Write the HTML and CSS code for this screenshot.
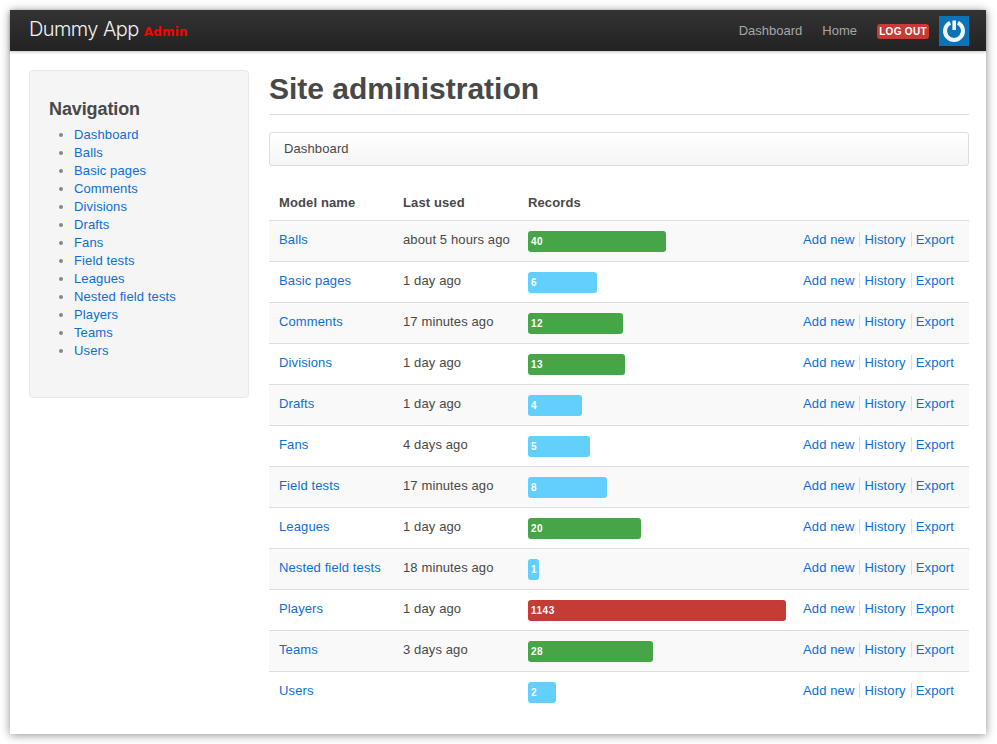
FILE: index.html
```html
<!DOCTYPE html>
<html lang="en">
<head>
<meta charset="utf-8">
<title>Site administration</title>
<link rel="stylesheet" href="styles.css">
</head>
<body>
<div class="window">
  <header class="navbar">
    <div class="brand">Dummy App <span class="brand-tag">Admin</span></div>
    <nav class="topnav">
      <a href="#">Dashboard</a>
      <a href="#">Home</a>
      <a href="#" class="logout">LOG OUT</a>
      <span class="avatar">
        <svg width="30" height="30" viewBox="0 0 30 30"><path d="M11.2 6.8a9 9 0 1 0 7.6 0" fill="none" stroke="#f1f6fa" stroke-width="4"/><path d="M15.2 4.5v9.5" fill="none" stroke="#f1f6fa" stroke-width="3.6"/></svg>
      </span>
    </nav>
  </header>
  <div class="layout">
    <aside class="sidebar">
      <h3>Navigation</h3>
      <ul>
        <li><a href="#">Dashboard</a></li>
        <li><a href="#">Balls</a></li>
        <li><a href="#">Basic pages</a></li>
        <li><a href="#">Comments</a></li>
        <li><a href="#">Divisions</a></li>
        <li><a href="#">Drafts</a></li>
        <li><a href="#">Fans</a></li>
        <li><a href="#">Field tests</a></li>
        <li><a href="#">Leagues</a></li>
        <li><a href="#">Nested field tests</a></li>
        <li><a href="#">Players</a></li>
        <li><a href="#">Teams</a></li>
        <li><a href="#">Users</a></li>
      </ul>
    </aside>
    <main class="content">
      <h1>Site administration</h1>
      <div class="breadcrumb">Dashboard</div>
      <table class="models">
        <thead>
          <tr><th class="c-name">Model name</th><th class="c-used">Last used</th><th class="c-rec">Records</th><th class="c-act"></th></tr>
        </thead>
        <tbody>
          <tr><td><a href="#">Balls</a></td><td>about 5 hours ago</td><td><div class="bar green" style="width:138px">40</div></td><td class="actions"><a href="#">Add new</a><a href="#">History</a><a href="#">Export</a></td></tr>
          <tr><td><a href="#">Basic pages</a></td><td>1 day ago</td><td><div class="bar blue" style="width:69px">6</div></td><td class="actions"><a href="#">Add new</a><a href="#">History</a><a href="#">Export</a></td></tr>
          <tr><td><a href="#">Comments</a></td><td>17 minutes ago</td><td><div class="bar green" style="width:95px">12</div></td><td class="actions"><a href="#">Add new</a><a href="#">History</a><a href="#">Export</a></td></tr>
          <tr><td><a href="#">Divisions</a></td><td>1 day ago</td><td><div class="bar green" style="width:97px">13</div></td><td class="actions"><a href="#">Add new</a><a href="#">History</a><a href="#">Export</a></td></tr>
          <tr><td><a href="#">Drafts</a></td><td>1 day ago</td><td><div class="bar blue" style="width:54px">4</div></td><td class="actions"><a href="#">Add new</a><a href="#">History</a><a href="#">Export</a></td></tr>
          <tr><td><a href="#">Fans</a></td><td>4 days ago</td><td><div class="bar blue" style="width:62px">5</div></td><td class="actions"><a href="#">Add new</a><a href="#">History</a><a href="#">Export</a></td></tr>
          <tr><td><a href="#">Field tests</a></td><td>17 minutes ago</td><td><div class="bar blue" style="width:79px">8</div></td><td class="actions"><a href="#">Add new</a><a href="#">History</a><a href="#">Export</a></td></tr>
          <tr><td><a href="#">Leagues</a></td><td>1 day ago</td><td><div class="bar green" style="width:113px">20</div></td><td class="actions"><a href="#">Add new</a><a href="#">History</a><a href="#">Export</a></td></tr>
          <tr><td><a href="#">Nested field tests</a></td><td>18 minutes ago</td><td><div class="bar blue" style="width:11px">1</div></td><td class="actions"><a href="#">Add new</a><a href="#">History</a><a href="#">Export</a></td></tr>
          <tr><td><a href="#">Players</a></td><td>1 day ago</td><td><div class="bar red" style="width:258px">1143</div></td><td class="actions"><a href="#">Add new</a><a href="#">History</a><a href="#">Export</a></td></tr>
          <tr><td><a href="#">Teams</a></td><td>3 days ago</td><td><div class="bar green" style="width:125px">28</div></td><td class="actions"><a href="#">Add new</a><a href="#">History</a><a href="#">Export</a></td></tr>
          <tr><td><a href="#">Users</a></td><td></td><td><div class="bar blue" style="width:28px">2</div></td><td class="actions"><a href="#">Add new</a><a href="#">History</a><a href="#">Export</a></td></tr>
        </tbody>
      </table>
    </main>
  </div>
</div>
</body>
</html>
```
FILE: styles.css
```css
* { box-sizing: border-box; }
html, body { margin: 0; height: 100%; overflow: hidden; }
body {
  background: #fff;
  font-family: "Liberation Sans", Arial, sans-serif;
  font-size: 13px;
  line-height: 18px;
  color: #484848;
  letter-spacing: 0.12px;
}
a { color: #0b6fd8; text-decoration: none; }
.window {
  margin: 10px 0 0 10px;
  width: 976px;
  height: 724px;
  background: #fff;
  box-shadow: 0 1px 9px rgba(0, 0, 0, 0.45);
}
.navbar {
  height: 41px;
  display: flex;
  justify-content: space-between;
  padding: 0 17px 0 19px;
  background: linear-gradient(#333333, #222222);
  box-shadow: 0 1px 3px rgba(0, 0, 0, 0.25);
}
.brand {
  font-family: Inter, "Liberation Sans", sans-serif;
  font-weight: 300;
  font-size: 20px;
  line-height: 39px;
  letter-spacing: -0.6px;
  color: #f2f2f2;
}
.brand-tag {
  font-family: "DejaVu Sans", sans-serif;
  font-weight: 700;
  font-size: 12px;
  letter-spacing: 0.2px;
  color: #ff0000;
}
.topnav { display: flex; align-items: center; letter-spacing: 0; }
.topnav a { color: #a8a8a8; }
.topnav a + a { margin-left: 20px; }
.topnav .logout {
  width: 52px;
  height: 15px;
  border-radius: 3px;
  background: #c43c35;
  color: #fff;
  font-size: 10px;
  font-weight: 700;
  line-height: 15px;
  text-align: center;
  letter-spacing: 0.3px;
  margin-top: 1px;
}
.avatar {
  display: block;
  width: 30px;
  height: 30px;
  margin-left: 10px;
  background: #0d73b6;
}
.avatar svg { display: block; }
.layout {
  display: flex;
  gap: 20px;
  padding: 19px 17px 0 19px;
}
.sidebar {
  flex: none;
  width: 220px;
  height: 328px;
  padding: 28px 19px 0;
  background: #f5f5f5;
  border: 1px solid #e8e8e8;
  border-radius: 4px;
}
.sidebar h3 {
  margin: 0 0 7px;
  font-size: 18px;
  line-height: 20px;
  font-weight: 700;
  letter-spacing: -0.1px;
}
.sidebar ul { margin: 0; padding: 0 0 0 25px; }
.sidebar li { height: 18px; }
.sidebar li::marker { color: #888; }
.content { flex: 1; min-width: 0; }
h1 {
  margin: 0;
  height: 45px;
  padding-top: 1px;
  font-size: 30px;
  line-height: 36px;
  font-weight: 700;
  letter-spacing: 0;
  border-bottom: 1px solid #ddd;
}
.breadcrumb {
  margin-top: 17px;
  height: 34px;
  padding: 7px 14px;
  background: linear-gradient(#ffffff, #f5f5f5);
  border: 1px solid #ddd;
  border-radius: 3px;
}
.models {
  width: 700px;
  margin-top: 18px;
  border-collapse: collapse;
  table-layout: fixed;
}
.models th {
  height: 36px;
  padding: 3px 10px 0;
  text-align: left;
  font-weight: 700;
  border-bottom: 1px solid #ddd;
}
.c-name { width: 124px; }
.c-used { width: 125px; }
.c-rec { width: 275px; }
.models td {
  height: 41px;
  padding: 0 10px 2px;
  border-bottom: 1px solid #ddd;
  white-space: nowrap;
}
.models tbody tr:nth-child(odd) td { background: #f9f9f9; }
.models tbody tr:last-child td { border-bottom: 0; background: #fff; }
.bar {
  height: 21px;
  padding-left: 3px;
  margin-top: 3px;
  border-radius: 3px;
  font-size: 10px;
  font-weight: 700;
  line-height: 21px;
  letter-spacing: 0.5px;
  color: #fff;
}
.green { background: #46a546; }
.blue { background: #62cffc; }
.red { background: #c43c35; }
.actions a { padding: 0 5px 0 4px; border-left: 1px solid #ddd; }
.actions a:first-child { padding-left: 0; border-left: 0; }
```
